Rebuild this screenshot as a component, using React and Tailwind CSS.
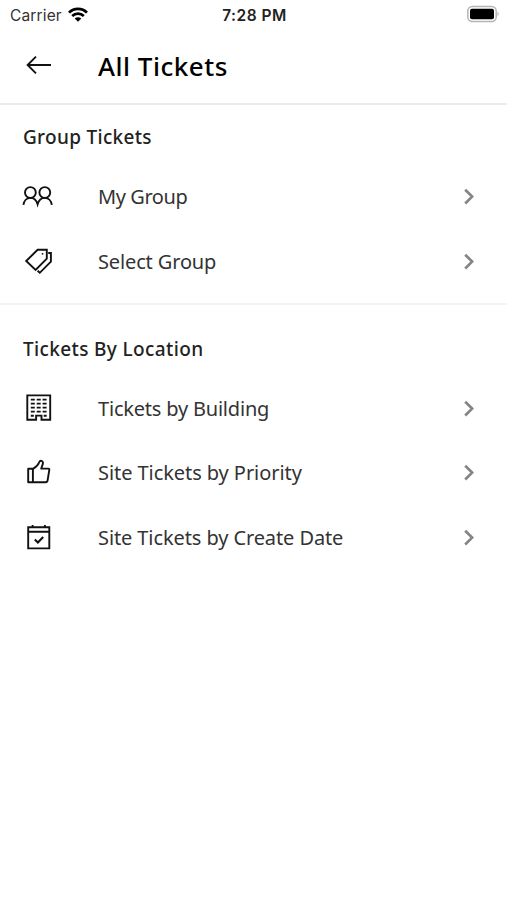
import React from 'react'

const iconProps = {
    width: 32,
    height: 32,
    viewBox: '0 0 32 32',
    fill: 'none',
    stroke: '#111',
    strokeWidth: 1.9,
    className: 'shrink-0',
}

const GroupIcon = () => (
    <svg {...iconProps}>
        <circle cx="8.4" cy="11.5" r="5.4" />
        <circle cx="22.8" cy="11.5" r="5.4" />
        <path d="M1.4 23.9c.6-4 3.3-7 7-7s6.2 2.8 7.2 6.4c1-3.6 3.5-6.4 7.2-6.4s6.4 3 7 7" />
    </svg>
)

const TagsIcon = () => (
    <svg {...iconProps}>
        <path d="M4.2 15 15.6 3.8h9.2v8.9L13.6 24z" />
        <path d="M26.2 7h2.7v8.7L17.8 26.8l-2.2-2" />
        <circle cx="20.6" cy="7.8" r=".9" fill="#111" stroke="none" />
    </svg>
)

const BuildingIcon = () => (
    <svg {...iconProps}>
        <path d="M5.3 2.4h22.9v24.3h-8.7v-4.1h-5.4v4.1H5.3z" />
        <path d="M8.8 6.7h15.8M8.8 10.7h15.8M8.8 14.7h15.8M8.8 18.7h15.8" strokeDasharray="4 1.9" strokeWidth="1.7" />
        <path d="M8.8 22.7h3M21.7 22.7h3" />
    </svg>
)

const ThumbIcon = () => (
    <svg {...iconProps}>
        <path d="M6.2 11.8h4.7v13.4H6.2zM10.9 12c3-1.8 5.1-3.8 6.2-6.5.5-1.2 1.4-2 2.3-1.7 1.6.5 1.9 2 1.2 3.9l-1.4 3.9h7.1c.8 0 1.1.5 1 1.2l-1.7 10.5c-.2 1.3-.9 1.9-2.1 1.9H10.9" strokeLinejoin="round" />
    </svg>
)

const CalendarIcon = () => (
    <svg {...iconProps}>
        <path d="M6.2 5.2h21.1v21.2H6.2zM6.2 9.7h21.1M10.6 3v3M22.9 3v3" />
        <path d="m12.8 17.4 3.1 3.1 5.3-5.5" strokeWidth="2.1" />
    </svg>
)

const sections = [
    {
        title: 'Group Tickets',
        titleStyle: 'pt-[4px] tracking-[0.3px]',
        rows: [
            { label: 'My Group', Icon: GroupIcon, spacing: 'tracking-[-0.42px]' },
            { label: 'Select Group', Icon: TagsIcon, spacing: 'tracking-[-0.14px]' },
        ],
    },
    {
        title: 'Tickets By Location',
        titleStyle: 'pt-[6px] tracking-[0.37px]',
        rows: [
            { label: 'Tickets by Building', Icon: BuildingIcon, spacing: 'tracking-[-0.2px]' },
            { label: 'Site Tickets by Priority', Icon: ThumbIcon, spacing: 'tracking-[-0.07px]' },
            { label: 'Site Tickets by Create Date', Icon: CalendarIcon, spacing: 'tracking-[-0.1px]' },
        ],
    },
]

function StatusBar() {
    return (
        <div className="grid h-[30px] grid-cols-3 items-center pl-[10px] pr-[8px] font-['Inter',sans-serif] text-[15.5px] text-[#333]">
            <div className="flex items-center gap-[6px]">
                <span className="pt-[2px] tracking-[0.15px]">Carrier</span>
                <svg className="mb-[2px]" width="20" height="15" viewBox="0 0 20 15" fill="none" stroke="#000" strokeWidth="2.7">
                    <path d="M1 5.6C6 .6 14 .6 19 5.6M4.2 9c3.3-3.2 8.3-3.2 11.6 0" />
                    <path d="M6.7 11.4c1.9-1.7 4.7-1.7 6.6 0L10 14.7z" fill="#000" stroke="none" />
                </svg>
            </div>
            <span className="whitespace-nowrap pt-[2px] text-center font-semibold tracking-[0.5px] text-[#222]">7:28 PM</span>
            <svg className="mb-[2px] justify-self-end" width="33" height="18" viewBox="0 0 33 18">
                <rect x="1.8" y="1.5" width="28.4" height="15" rx="4.5" fill="#fff" stroke="#b5b5b5" strokeWidth="1.5" />
                <rect x="4" y="3.8" width="24" height="10.4" rx="2" fill="#000" />
                <path d="M31.5 6.8c1.5.5 1.5 3.9 0 4.4z" fill="#b5b5b5" />
            </svg>
        </div>
    )
}

function Row({ label, Icon, spacing }) {
    return (
        <div className="flex h-[64.67px] items-center pl-[22px] pr-[30px]">
            <Icon />
            <span className={`ml-[44px] flex-1 whitespace-nowrap text-[20px] text-[#333] ${spacing}`}>{label}</span>
            <svg width="16" height="20" viewBox="0 0 16 20" fill="none" stroke="#858585" strokeWidth="2.7">
                <path d="m4.2 2.7 6.9 6.9-6.9 6.9" />
            </svg>
        </div>
    )
}

export default function App() {
    return (
        <div className="h-[900px] w-full overflow-hidden bg-white font-['Noto_Sans','Open_Sans',sans-serif]">
            <StatusBar />
            <div className="flex h-[75px] items-center border-b-2 border-[#ebebeb] pb-[2px] pl-[26px]">
                <svg className="mb-[1px]" width="26" height="20" viewBox="0 0 26 20" fill="none" stroke="#111" strokeWidth="1.9">
                    <path d="M25 10H2M10 1.6 1.6 10l8.4 8.4" />
                </svg>
                <h1 className="ml-[46px] mt-[1px] whitespace-nowrap text-[26px] font-medium tracking-[0.5px] text-black">All Tickets</h1>
            </div>
            {sections.map((section, i) => (
                <div key={section.title} className={i === 0 ? 'border-b-2 border-[#f3f3f3] pb-[9px]' : 'pt-[11px]'}>
                    <h2 className={`flex h-[60px] items-center pl-[23px] text-[19px] font-medium text-[#222] ${section.titleStyle}`}>
                        {section.title}
                    </h2>
                    {section.rows.map((row) => <Row key={row.label} {...row} />)}
                </div>
            ))}
        </div>
    )
}
